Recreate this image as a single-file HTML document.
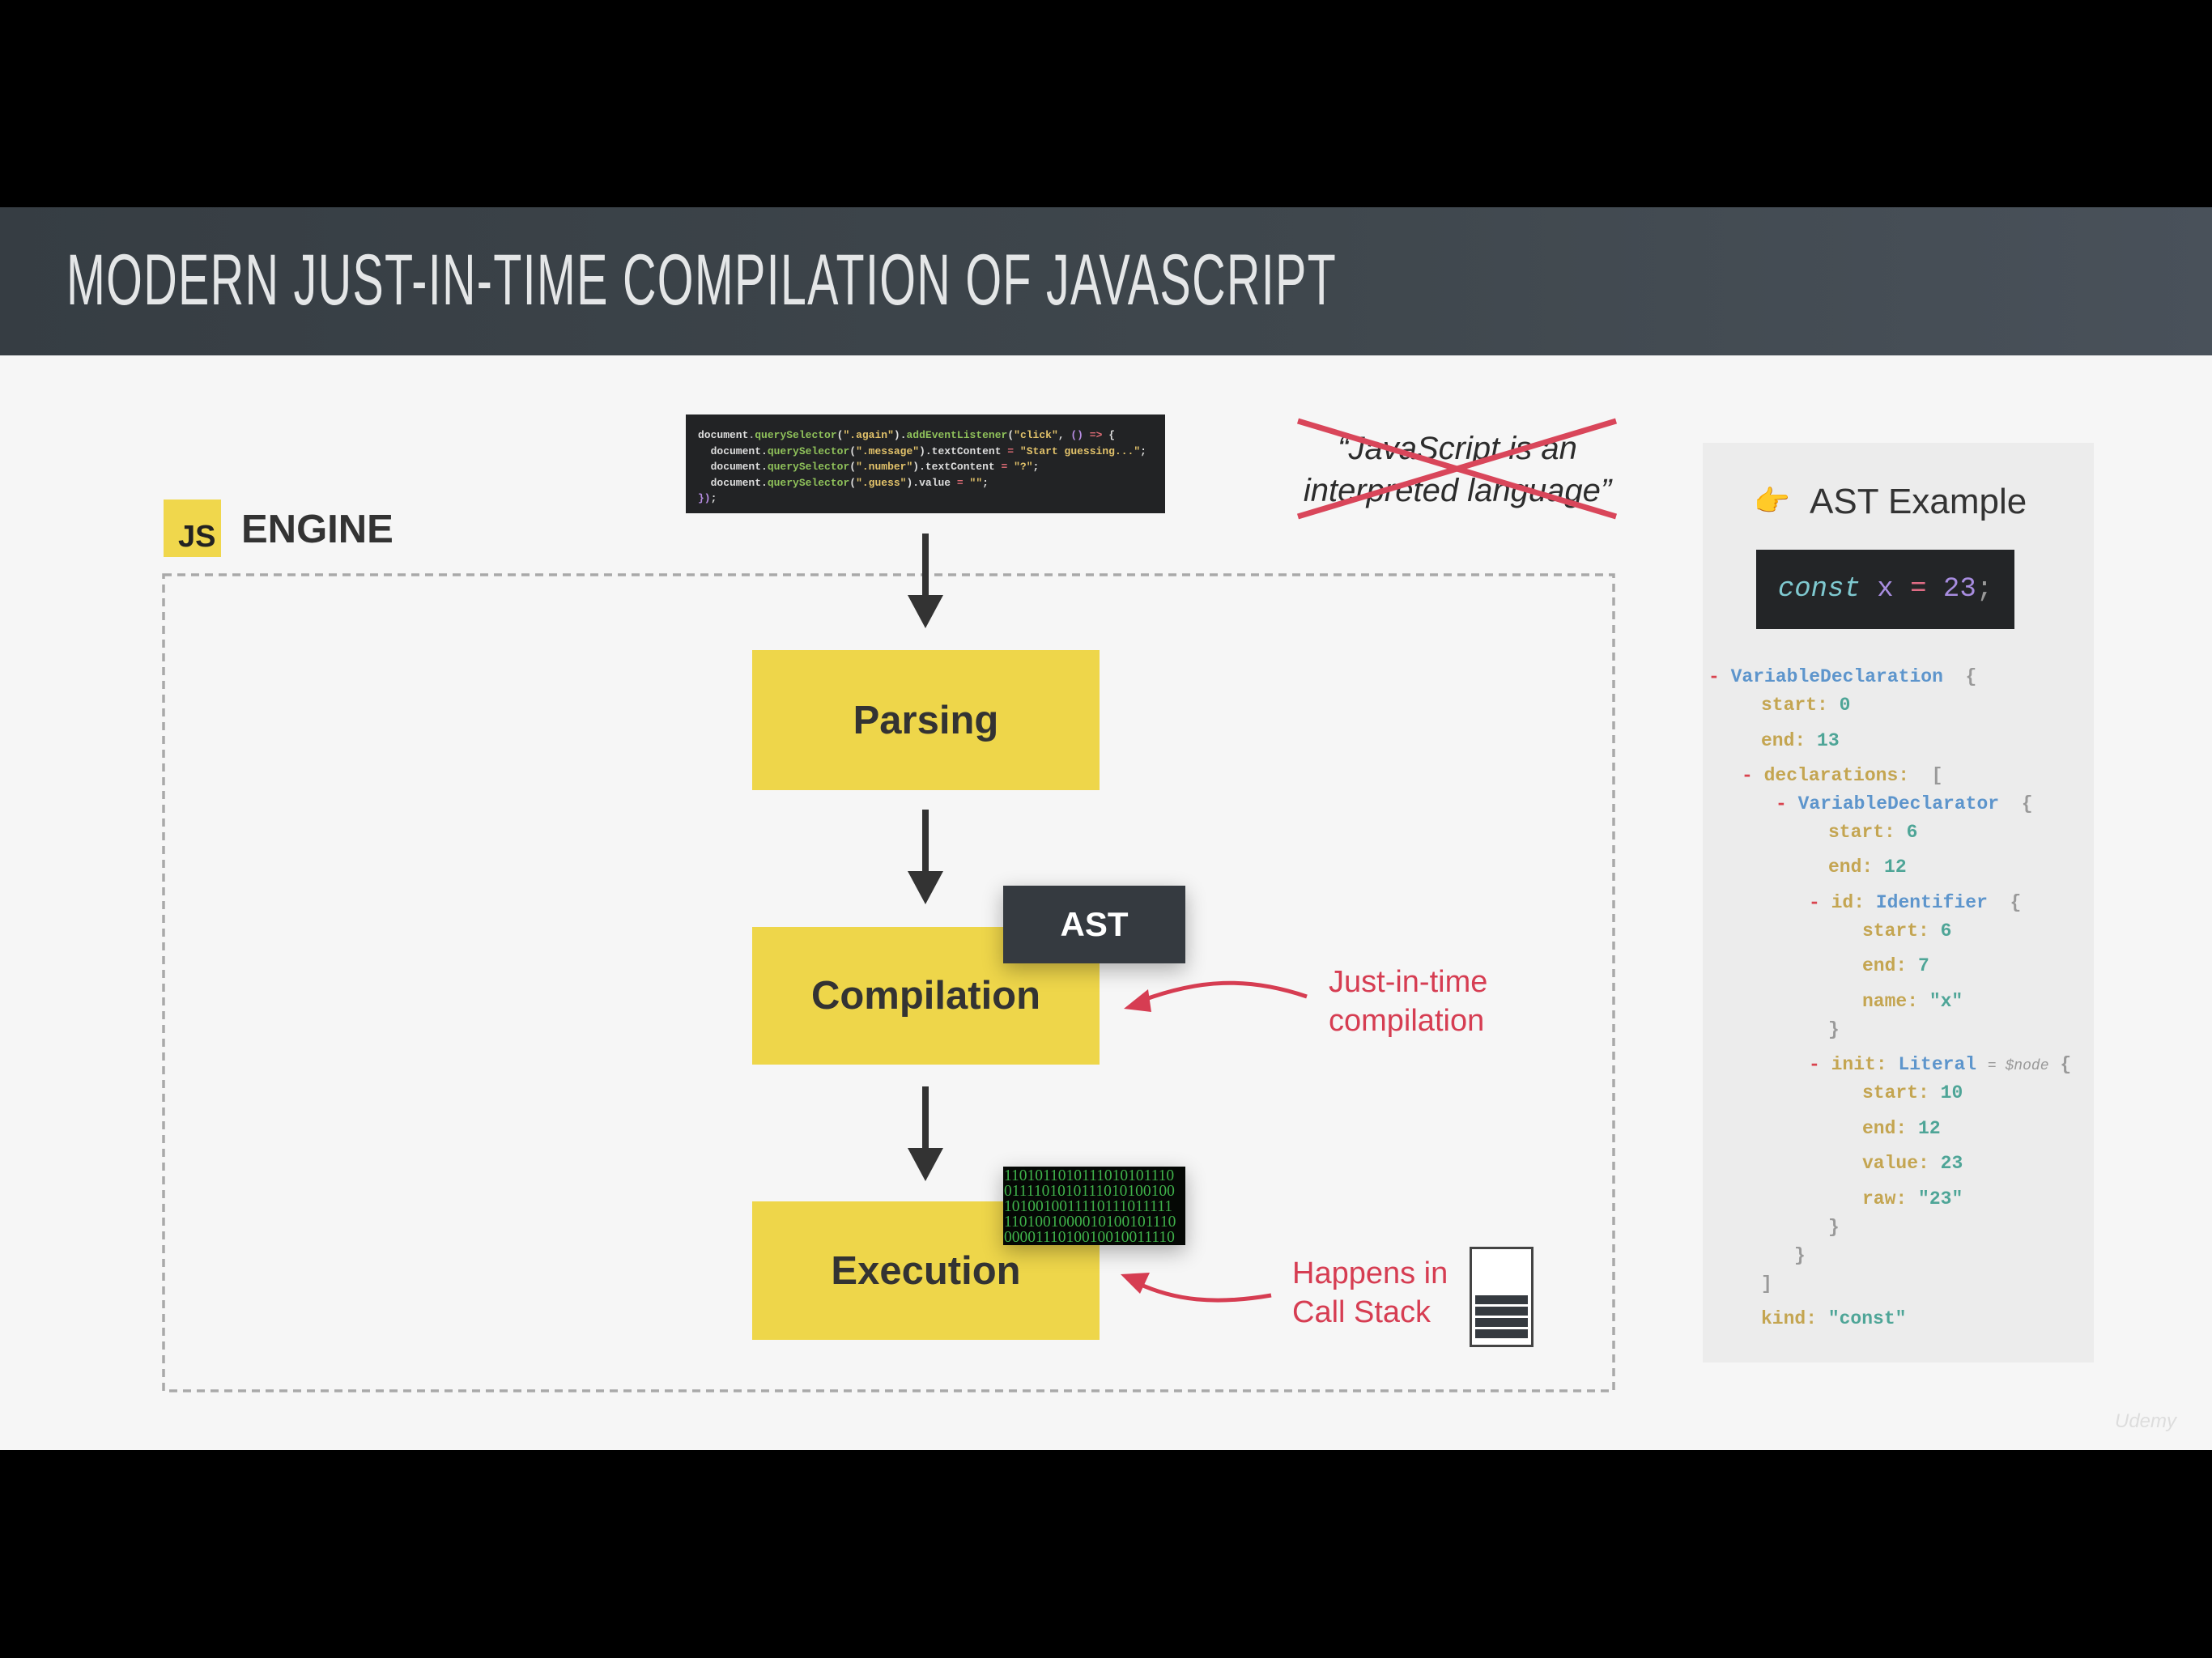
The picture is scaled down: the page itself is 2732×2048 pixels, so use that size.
<!DOCTYPE html>
<html><head><meta charset="utf-8"><style>
*{margin:0;padding:0;box-sizing:border-box}
body{width:2732px;height:2048px;background:#000;position:relative;overflow:hidden;font-family:"Liberation Sans",sans-serif}
.a{position:absolute}
#hdr{left:0;top:256px;width:2732px;height:183px;background:linear-gradient(90deg,#363d43,#3f474d 60%,#49515a)}
#title{left:82px;top:300px;font-size:89px;line-height:90px;color:#e4e6e7;white-space:nowrap;transform-origin:0 0;transform:scaleX(0.646);letter-spacing:2px}
#content{left:0;top:439px;width:2732px;height:1352px;background:#f6f6f6}
.code{background:#222325;font-family:"Liberation Mono",monospace;font-size:13px;line-height:19.5px;color:#ddd;font-weight:bold;white-space:pre}
.y{background:#eed64a;color:#333;font-size:49px;font-weight:bold;display:flex;align-items:center;justify-content:center}
.mono{font-family:"Liberation Mono",monospace;font-weight:bold;font-size:23px;white-space:pre;line-height:30px}
.k{color:#c4a551}.n{color:#4ea597}.b{color:#5d95cc}.m{color:#d9434e}.g{color:#999}
.red{color:#d63d52;font-size:38px;line-height:48px}
</style></head><body>
<div class="a" id="hdr"></div>
<div class="a" id="title">MODERN JUST-IN-TIME COMPILATION OF JAVASCRIPT</div>
<div class="a" id="content"></div>

<div class="a code" style="left:847px;top:512px;width:592px;height:122px;padding:16px 0 0 15px">document<span style="color:#aaa">.</span><span style="color:#8fc15a">querySelector</span>(<span style="color:#e2c26a">".again"</span>).<span style="color:#8fc15a">addEventListener</span>(<span style="color:#e2c26a">"click"</span>, <span style="color:#b58be0">()</span> <span style="color:#e06c75">=&gt;</span> {
  document.<span style="color:#8fc15a">querySelector</span>(<span style="color:#e2c26a">".message"</span>).textContent <span style="color:#e06c75">=</span> <span style="color:#e2c26a">"Start guessing..."</span>;
  document.<span style="color:#8fc15a">querySelector</span>(<span style="color:#e2c26a">".number"</span>).textContent <span style="color:#e06c75">=</span> <span style="color:#e2c26a">"?"</span>;
  document.<span style="color:#8fc15a">querySelector</span>(<span style="color:#e2c26a">".guess"</span>).value <span style="color:#e06c75">=</span> <span style="color:#e2c26a">""</span>;
<span style="color:#b58be0">})</span>;</div>

<div class="a" style="left:1590px;top:528px;width:420px;text-align:center;font-style:italic;font-size:40px;line-height:52px;color:#2c2c2c">“JavaScript is an<br>interpreted language”</div>
<svg class="a" style="left:0;top:0" width="2732" height="2048">
<line x1="1603" y1="520" x2="1996" y2="638" stroke="#d9465a" stroke-width="7"/>
<line x1="1603" y1="638" x2="1996" y2="520" stroke="#d9465a" stroke-width="7"/>
<rect x="202" y="710" width="1791" height="1008" fill="none" stroke="#a9a9a9" stroke-width="3.5" stroke-dasharray="10 7"/>
<g fill="#333" stroke="#333">
<line x1="1143" y1="659" x2="1143" y2="745" stroke-width="8"/><polygon points="1121,735 1165,735 1143,776" stroke="none"/>
<line x1="1143" y1="1000" x2="1143" y2="1086" stroke-width="8"/><polygon points="1121,1076 1165,1076 1143,1117" stroke="none"/>
<line x1="1143" y1="1342" x2="1143" y2="1428" stroke-width="8"/><polygon points="1121,1418 1165,1418 1143,1459" stroke="none"/>
</g>
<path d="M1614,1231 C1540,1206 1480,1210 1410,1236" fill="none" stroke="#d63d52" stroke-width="5"/>
<polygon points="1388,1246 1418,1222 1422,1250" fill="#d63d52"/>
<path d="M1570,1600 C1500,1612 1450,1606 1405,1585" fill="none" stroke="#d63d52" stroke-width="5"/>
<polygon points="1384,1574 1420,1572 1408,1598" fill="#d63d52"/>
</svg>

<div class="a" style="left:202px;top:617px;width:71px;height:71px;background:#f0d74c"></div>
<div class="a" style="left:220px;top:644px;font-size:38px;font-weight:bold;color:#222;line-height:38px">JS</div>
<div class="a" style="left:298px;top:626px;font-size:49px;font-weight:bold;color:#333;line-height:56px">ENGINE</div>

<div class="a y" style="left:929px;top:803px;width:429px;height:173px">Parsing</div>
<div class="a y" style="left:929px;top:1145px;width:429px;height:170px">Compilation</div>
<div class="a y" style="left:929px;top:1484px;width:429px;height:171px">Execution</div>

<div class="a" style="left:1239px;top:1094px;width:225px;height:96px;background:#353a40;color:#fff;font-size:42px;font-weight:bold;display:flex;align-items:center;justify-content:center;box-shadow:0 8px 24px rgba(0,0,0,.3)">AST</div>
<div class="a" style="left:1239px;top:1441px;width:225px;height:97px;background:#050805;color:#3fb24a;font-family:'Liberation Serif',serif;font-size:19.5px;line-height:19px;padding:2px 0 0 1px;overflow:hidden;white-space:pre;box-shadow:0 8px 24px rgba(0,0,0,.3)">1101011010111010101110
0111101010111010100100
1010010011110111011111
1101001000010100101110
0000111010010010011110</div>

<div class="a red" style="left:1641px;top:1189px">Just-in-time<br>compilation</div>
<div class="a red" style="left:1596px;top:1549px">Happens in<br>Call Stack</div>
<div class="a" style="left:1815px;top:1540px;width:79px;height:124px;border:3px solid #444;background:#fff"></div>
<div class="a" style="left:1822px;top:1600px;width:65px;height:56px;background:repeating-linear-gradient(#353a40 0 11px,#fff 11px 14px)"></div>

<div class="a" style="left:2103px;top:547px;width:483px;height:1136px;background:#ececec"></div>
<div class="a" style="left:2166px;top:598px;font-size:36px;color:#e8a93a">👉</div>
<div class="a" style="left:2235px;top:592px;font-size:44px;color:#333;line-height:56px">AST Example</div>
<div class="a" style="left:2169px;top:679px;width:319px;height:98px;background:#232527;font-family:'Liberation Mono',monospace;font-size:34px;line-height:98px;text-align:center;white-space:pre"><span style="color:#7fc9d0;font-style:italic">const</span> <span style="color:#a88de0">x</span> <span style="color:#e06c85">=</span> <span style="color:#a88de0">23</span><span style="color:#999">;</span></div>

<div class="a mono" style="left:2110px;top:821px"><span class="m">-</span> <span class="b">VariableDeclaration</span>  <span class="g">{</span></div>
<div class="a mono" style="left:2175px;top:856px"><span class="k">start:</span> <span class="n">0</span></div>
<div class="a mono" style="left:2175px;top:900px"><span class="k">end:</span> <span class="n">13</span></div>
<div class="a mono" style="left:2151px;top:943px"><span class="m">-</span> <span class="k">declarations:</span>  <span class="g">[</span></div>
<div class="a mono" style="left:2193px;top:978px"><span class="m">-</span> <span class="b">VariableDeclarator</span>  <span class="g">{</span></div>
<div class="a mono" style="left:2258px;top:1013px"><span class="k">start:</span> <span class="n">6</span></div>
<div class="a mono" style="left:2258px;top:1056px"><span class="k">end:</span> <span class="n">12</span></div>
<div class="a mono" style="left:2234px;top:1100px"><span class="m">-</span> <span class="k">id:</span> <span class="b">Identifier</span>  <span class="g">{</span></div>
<div class="a mono" style="left:2300px;top:1135px"><span class="k">start:</span> <span class="n">6</span></div>
<div class="a mono" style="left:2300px;top:1178px"><span class="k">end:</span> <span class="n">7</span></div>
<div class="a mono" style="left:2300px;top:1222px"><span class="k">name:</span> <span class="n">"x"</span></div>
<div class="a mono" style="left:2258px;top:1257px"><span class="g">}</span></div>
<div class="a mono" style="left:2234px;top:1300px"><span class="m">-</span> <span class="k">init:</span> <span class="b">Literal</span> <span class="g" style="font-style:italic;font-weight:normal;font-size:18px">= $node</span> <span class="g">{</span></div>
<div class="a mono" style="left:2300px;top:1335px"><span class="k">start:</span> <span class="n">10</span></div>
<div class="a mono" style="left:2300px;top:1379px"><span class="k">end:</span> <span class="n">12</span></div>
<div class="a mono" style="left:2300px;top:1422px"><span class="k">value:</span> <span class="n">23</span></div>
<div class="a mono" style="left:2300px;top:1466px"><span class="k">raw:</span> <span class="n">"23"</span></div>
<div class="a mono" style="left:2258px;top:1501px"><span class="g">}</span></div>
<div class="a mono" style="left:2216px;top:1536px"><span class="g">}</span></div>
<div class="a mono" style="left:2175px;top:1571px"><span class="g">]</span></div>
<div class="a mono" style="left:2175px;top:1614px"><span class="k">kind:</span> <span class="n">"const"</span></div>

<div class="a" style="left:2612px;top:1742px;font-size:24px;color:#ddd;font-style:italic">Udemy</div>
</body></html>
